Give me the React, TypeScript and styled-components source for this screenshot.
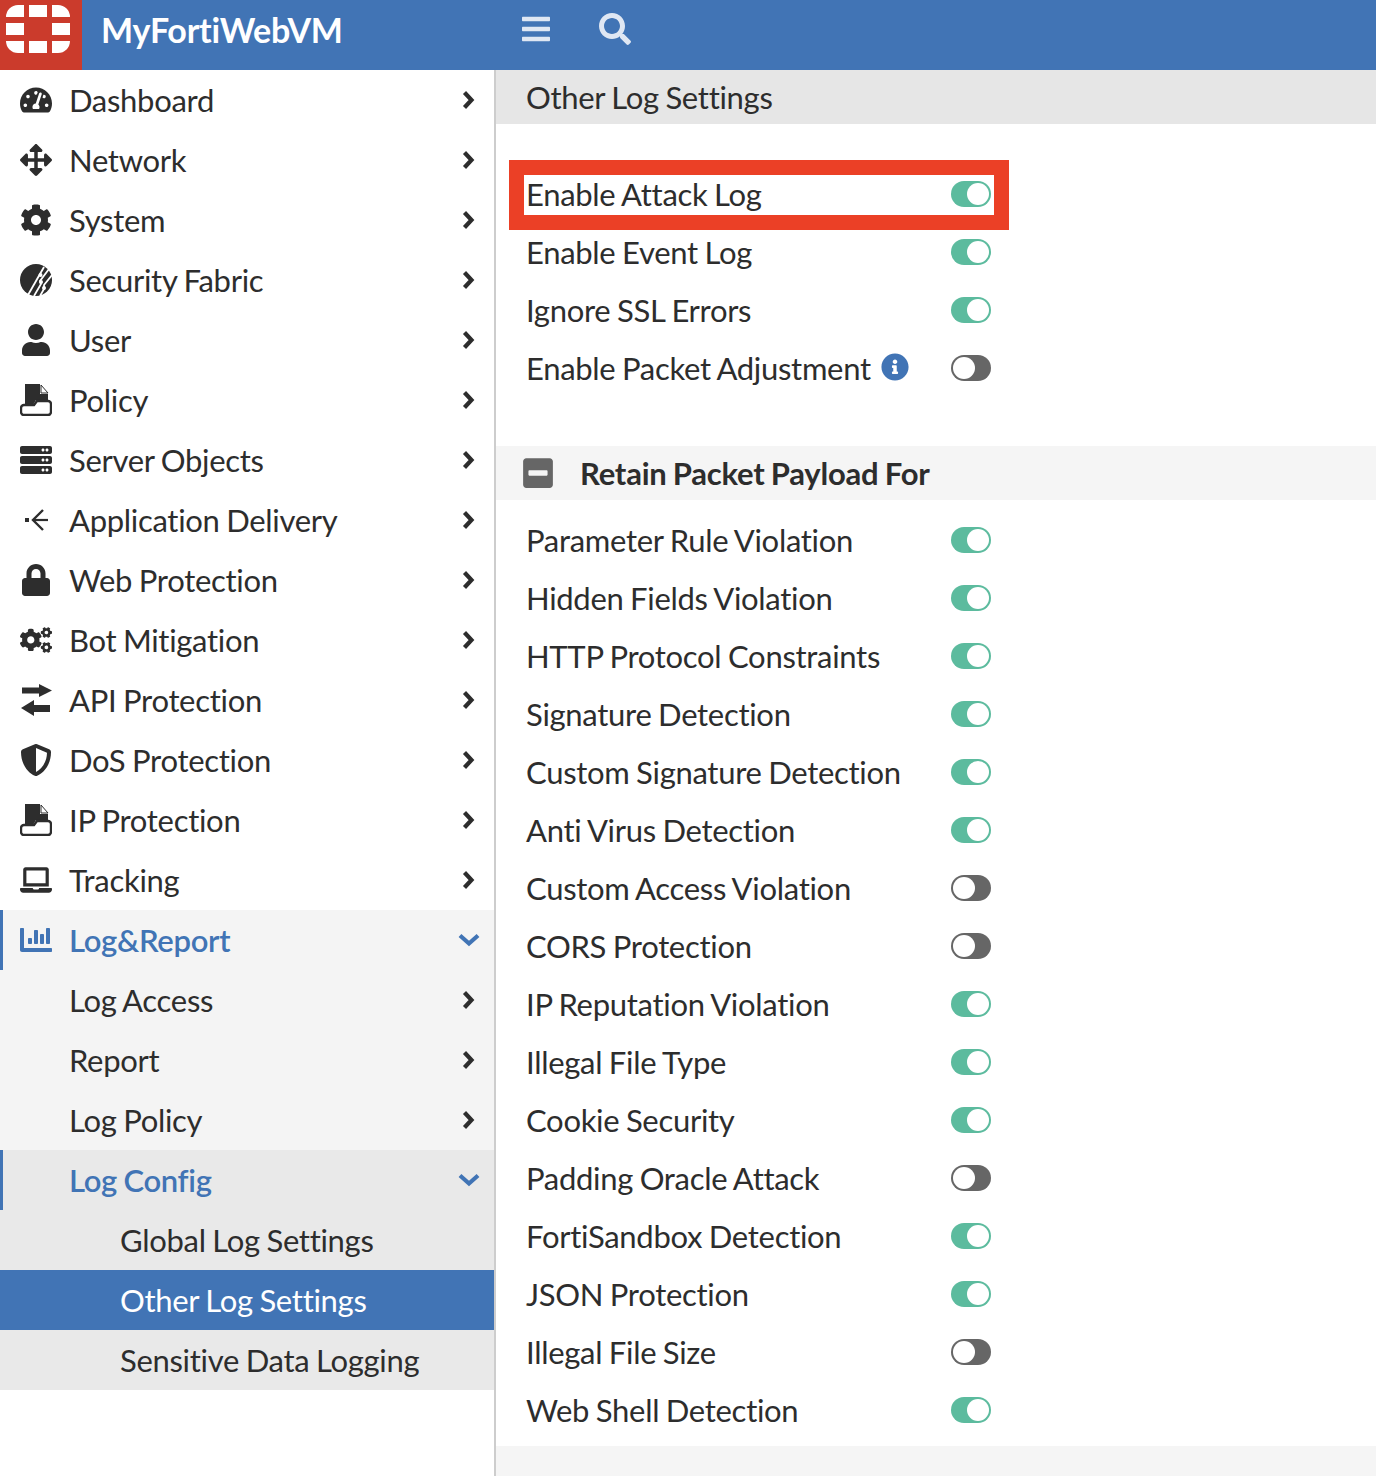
import React from "react";
import styled, { createGlobalStyle } from "styled-components";
import {
  FaTachometerAlt, FaArrowsAlt, FaCog, FaUser, FaServer, FaLock, FaCogs,
  FaShieldAlt, FaLaptop, FaChartBar, FaBars, FaSearch,
  FaInfoCircle, FaMinusSquare,
} from "react-icons/fa";

const BLUE = "#4174b5";

const Global = createGlobalStyle`
  html, body { margin: 0; padding: 0; background: #fff; }
  body { font-family: Lato, "Open Sans", sans-serif; color: #2d2d2d; letter-spacing: -0.3px; word-spacing: -1px; }
`;

const Page = styled.div`
  width: 1376px; height: 1476px; display: flex; flex-direction: column; overflow: hidden;
`;
const Header = styled.header`
  height: 70px; flex: none; display: flex; align-items: center; background: ${BLUE};
`;
const LogoBox = styled.div`
  width: 82px; height: 70px; box-sizing: border-box; padding: 0 6px 12px 0; background: #cb3b2c;
  display: flex; align-items: center; justify-content: center;
`;
const Brand = styled.div`
  width: 420px; padding: 0 0 12px 19px; box-sizing: border-box; color: #fff; font-size: 34px; font-weight: 700; letter-spacing: -0.25px;
`;
const HeaderButtons = styled.div`
  display: flex; align-items: center; gap: 47px; color: #dfe7f3; margin-left: 18px; padding-bottom: 12px;
`;
const Body = styled.div`
  flex: 1; display: flex; min-height: 0;
`;
const Sidebar = styled.nav`
  width: 496px; flex: none; box-sizing: border-box; border-right: 2px solid #cdcdcd;
`;
const Group = styled.div<{ $bg: string }>`
  background: ${(p) => p.$bg};
`;
const NavRow = styled.div<{ $level: number; $active?: boolean; $selected?: boolean; $bar?: boolean }>`
  height: 60px; display: flex; align-items: center; box-sizing: border-box;
  padding-left: ${(p) => (p.$level === 2 ? 120 : 20)}px; padding-right: 13px;
  font-size: 31px;
  font-weight: ${(p) => (p.$active ? 600 : 400)};
  color: ${(p) => (p.$selected ? "#fff" : p.$active ? BLUE : "#2d2d2d")};
  background: ${(p) => (p.$selected ? BLUE : "transparent")};
  box-shadow: ${(p) => (p.$bar ? `inset 3px 0 0 ${BLUE}` : "none")};
`;
const NavIcon = styled.span`
  width: 32px; height: 32px; margin-right: 17px; flex: none; display: flex; align-items: center; justify-content: center;
`;
const NavLabel = styled.span`
  flex: 1; white-space: nowrap;
`;
const Chevron = styled.span<{ $active?: boolean }>`
  width: 24px; height: 24px; display: flex; align-items: center; justify-content: center;
  color: ${(p) => (p.$active ? BLUE : "#2d2d2d")};
`;
const Main = styled.main`
  flex: 1; display: flex; flex-direction: column; min-width: 0;
`;
const TitleBar = styled.div`
  height: 54px; flex: none; background: #e6e6e6; padding: 0 0 1px 30px; display: flex; align-items: center;
  font-size: 31px; box-sizing: border-box;
`;
const TopList = styled.div`
  padding: 42px 0 48px 30px;
`;
const SectionHead = styled.div`
  height: 54px; flex: none; background: #f5f5f5; display: flex; align-items: center; padding-left: 27px;
  font-size: 31px; font-weight: 700; gap: 27px; box-sizing: border-box; letter-spacing: -0.23px; word-spacing: -1px;
`;
const SectionIcon = styled.span`
  width: 30px; height: 30px; display: flex; align-items: center; justify-content: center; color: #666;
`;
const LowerList = styled.div`
  padding: 12px 0 6px 30px;
`;
const Row = styled.div<{ $marked?: boolean }>`
  position: relative; width: 465px; height: 58px; display: flex; align-items: center;
  font-size: 31px;
  ${(p) =>
    p.$marked &&
    `&::after { content: ""; position: absolute; left: -17px; top: -6px; width: 500px; height: 70px;
       box-sizing: border-box; border: 15px solid #eb4026; pointer-events: none; }`}
`;
const RowLabel = styled.span`
  flex: 1; display: flex; align-items: center; gap: 10px; white-space: nowrap; margin-top: -2px;
`;
const Info = styled.span`
  display: flex; color: ${BLUE}; margin-top: -2px;
`;
const Toggle = styled.span<{ $on: boolean }>`
  width: 40px; height: 26px; flex: none; border-radius: 13px; box-sizing: border-box; padding: 2px;
  display: flex; justify-content: ${(p) => (p.$on ? "flex-end" : "flex-start")};
  background: ${(p) => (p.$on ? "#5cbb9e" : "#666")}; margin-top: -2px;
  &::before { content: ""; width: 22px; height: 22px; border-radius: 50%; background: #fff; }
`;
const Footer = styled.div`
  flex: 1; background: #f5f5f5;
`;

const Logo = () => (
  <svg width="64" height="48" viewBox="0 0 64 48" fill="#fff">
    <path d="M0 12A12 12 0 0 1 12 0H18V12H0Z" />
    <rect x="23" y="0" width="18" height="12" />
    <path d="M46 0H52A12 12 0 0 1 64 12H46Z" />
    <rect x="0" y="18" width="18" height="12" />
    <rect x="46" y="18" width="18" height="12" />
    <path d="M0 36H18V48H12A12 12 0 0 1 0 36Z" />
    <rect x="23" y="36" width="18" height="12" />
    <path d="M46 36H64A12 12 0 0 1 52 48H46Z" />
  </svg>
);

const ChevronRight = () => (
  <svg width="14" height="20" viewBox="0 0 14 20" fill="none" stroke="currentColor" strokeWidth="4.2">
    <path d="M2.5 2.5L9.5 10L2.5 17.5" />
  </svg>
);
const ChevronDown = () => (
  <svg width="22" height="14" viewBox="0 0 22 14" fill="none" stroke="currentColor" strokeWidth="4.2">
    <path d="M2 2.5L11 10.5L20 2.5" />
  </svg>
);

const FabricIcon = () => (
  <svg width="32" height="32" viewBox="0 0 32 32">
    <circle cx="16" cy="16" r="16" fill="#2d2d2d" />
    <g stroke="#fff" strokeWidth="1.8" fill="none">
      <path d="M8 31L24 3" />
      <path d="M14 32L21 20L20 17L29 5" />
      <path d="M20 32L24 25L24 21L32 11" />
    </g>
    <g fill="#fff">
      <circle cx="20.5" cy="11" r="2" />
      <circle cx="21" cy="18" r="2" />
      <circle cx="24" cy="24" r="2" />
    </g>
  </svg>
);

const PolicyIcon = () => (
  <svg width="32" height="32" viewBox="0 0 32 32">
    <path d="M5 0H20V10H28V16H16L13 21H5Z" fill="#2d2d2d" />
    <path d="M21 1L28 9H21Z" fill="#fff" stroke="#2d2d2d" strokeWidth="1" />
    <path d="M4 21H14L17 17H28A3 3 0 0 1 31 20V28A3 3 0 0 1 28 31H4A3 3 0 0 1 1 28V24A3 3 0 0 1 4 21Z" fill="#fff" stroke="#2d2d2d" strokeWidth="2.4" />
  </svg>
);

const DeliveryIcon = () => (
  <svg width="32" height="32" viewBox="0 0 32 32" fill="none" stroke="#2d2d2d">
    <rect x="5" y="14" width="4" height="4" fill="#2d2d2d" stroke="none" />
    <path d="M28 16H14" strokeWidth="2.2" />
    <path d="M23 6L13 16L23 26" strokeWidth="2.4" />
  </svg>
);

const ExchangeIcon = () => (
  <svg width="32" height="32" viewBox="0 0 32 32" fill="#2d2d2d">
    <path d="M2 3.5H19V0L32 6.5L19 13V9.5H2Z" />
    <path d="M30 21H14V16L1 24L14 32V28H30Z" />
  </svg>
);

type Item = { label: string; icon?: React.ReactNode };
const top: Item[] = [
  { label: "Dashboard", icon: <FaTachometerAlt size={32} /> },
  { label: "Network", icon: <FaArrowsAlt size={32} /> },
  { label: "System", icon: <FaCog size={32} /> },
  { label: "Security Fabric", icon: <FabricIcon /> },
  { label: "User", icon: <FaUser size={32} /> },
  { label: "Policy", icon: <PolicyIcon /> },
  { label: "Server Objects", icon: <FaServer size={32} /> },
  { label: "Application Delivery", icon: <DeliveryIcon /> },
  { label: "Web Protection", icon: <FaLock size={32} /> },
  { label: "Bot Mitigation", icon: <FaCogs size={32} /> },
  { label: "API Protection", icon: <ExchangeIcon /> },
  { label: "DoS Protection", icon: <FaShieldAlt size={32} /> },
  { label: "IP Protection", icon: <PolicyIcon /> },
  { label: "Tracking", icon: <FaLaptop size={32} /> },
];

const upper: [string, boolean, boolean?][] = [
  ["Enable Event Log", true],
  ["Ignore SSL Errors", true],
  ["Enable Packet Adjustment", false, true],
];
const lower: [string, boolean][] = [
  ["Parameter Rule Violation", true],
  ["Hidden Fields Violation", true],
  ["HTTP Protocol Constraints", true],
  ["Signature Detection", true],
  ["Custom Signature Detection", true],
  ["Anti Virus Detection", true],
  ["Custom Access Violation", false],
  ["CORS Protection", false],
  ["IP Reputation Violation", true],
  ["Illegal File Type", true],
  ["Cookie Security", true],
  ["Padding Oracle Attack", false],
  ["FortiSandbox Detection", true],
  ["JSON Protection", true],
  ["Illegal File Size", false],
  ["Web Shell Detection", true],
];

export default function App() {
  return (
    <Page>
      <Global />
      <Header>
        <LogoBox><Logo /></LogoBox>
        <Brand>MyFortiWebVM</Brand>
        <HeaderButtons>
          <FaBars size={32} />
          <FaSearch size={32} />
        </HeaderButtons>
      </Header>
      <Body>
        <Sidebar>
          {top.map((it) => (
            <NavRow key={it.label} $level={0}>
              <NavIcon>{it.icon}</NavIcon>
              <NavLabel>{it.label}</NavLabel>
              <Chevron><ChevronRight /></Chevron>
            </NavRow>
          ))}
          <Group $bg="#f4f4f4">
            <NavRow $level={0} $active $bar>
              <NavIcon><FaChartBar size={32} /></NavIcon>
              <NavLabel>Log&amp;Report</NavLabel>
              <Chevron $active><ChevronDown /></Chevron>
            </NavRow>
            {["Log Access", "Report", "Log Policy"].map((l) => (
              <NavRow key={l} $level={0}>
                <NavIcon />
                <NavLabel>{l}</NavLabel>
                <Chevron><ChevronRight /></Chevron>
              </NavRow>
            ))}
          </Group>
          <Group $bg="#e9e9e9">
            <NavRow $level={0} $active $bar>
              <NavIcon />
              <NavLabel>Log Config</NavLabel>
              <Chevron $active><ChevronDown /></Chevron>
            </NavRow>
            <NavRow $level={2}><NavLabel>Global Log Settings</NavLabel></NavRow>
            <NavRow $level={2} $selected><NavLabel>Other Log Settings</NavLabel></NavRow>
            <NavRow $level={2}><NavLabel>Sensitive Data Logging</NavLabel></NavRow>
          </Group>
        </Sidebar>
        <Main>
          <TitleBar>Other Log Settings</TitleBar>
          <TopList>
            <Row $marked>
              <RowLabel>Enable Attack Log</RowLabel>
              <Toggle $on />
            </Row>
            {upper.map(([l, on, info]) => (
              <Row key={l}>
                <RowLabel>
                  {l}
                  {info && <Info><FaInfoCircle size={28} /></Info>}
                </RowLabel>
                <Toggle $on={on} />
              </Row>
            ))}
          </TopList>
          <SectionHead>
            <SectionIcon><FaMinusSquare size={34} /></SectionIcon>
            Retain Packet Payload For
          </SectionHead>
          <LowerList>
            {lower.map(([l, on]) => (
              <Row key={l}>
                <RowLabel>{l}</RowLabel>
                <Toggle $on={on} />
              </Row>
            ))}
          </LowerList>
          <Footer />
        </Main>
      </Body>
    </Page>
  );
}
